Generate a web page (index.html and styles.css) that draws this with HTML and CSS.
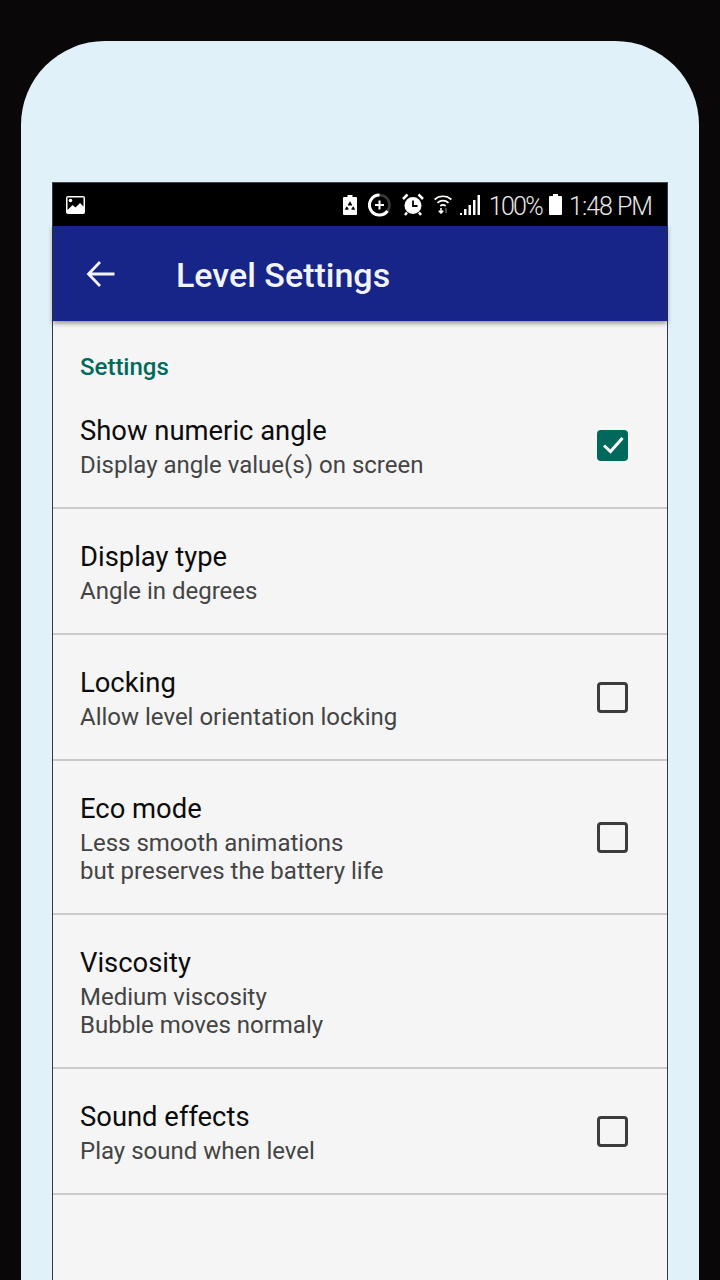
FILE: index.html
```html
<!DOCTYPE html>
<html lang="en">
<head>
  <meta charset="UTF-8">
  <meta name="viewport" content="width=device-width, initial-scale=1.0">
  <title>Level Settings</title>
  <link rel="stylesheet" href="styles.css">
</head>
<body>
  <div class="phone">
    <div class="screen">
      <div class="statusbar">
        <svg class="ic-image" width="19" height="18" viewBox="0 0 19 18"><path fill="#fff" d="M2 0h15a2 2 0 0 1 2 2v14a2 2 0 0 1-2 2H2a2 2 0 0 1-2-2V2a2 2 0 0 1 2-2z"/><path fill="#000" d="M1.500 1.500h16v9L14 7l-4.500 4.500-3-2.500-5 5z"/><circle cx="4.500" cy="4.500" r="1.800" fill="#fff"/></svg>
        <div class="status-right">
          <svg class="ic-saver" width="14" height="20" viewBox="0 0 14 20"><path fill="#fff" d="M4.500 0h5v2H13a1 1 0 0 1 1 1v16a1 1 0 0 1-1 1H1a1 1 0 0 1-1-1V3a1 1 0 0 1 1-1h3.500z"/><path fill="none" stroke="#000" stroke-width="1.700" d="M5.500 10.500L7 8l1.500 2.500M9.800 12l1 2H8.500M5.500 14H3.200l1-2"/></svg>
          <svg class="ic-data" width="23" height="24" viewBox="0 0 23 24"><circle cx="11.500" cy="12" r="10" fill="none" stroke="#3a3a3a" stroke-width="2.500"/><path fill="none" stroke="#fff" stroke-width="3" d="M11.500 2a10 10 0 1 0 8 16"/><path stroke="#fff" stroke-width="2" d="M11.500 7.500v9M7 12h9"/></svg>
          <svg class="ic-alarm" width="22" height="23" viewBox="0 0 22 23"><circle cx="11" cy="12.500" r="8.500" fill="#fff"/><path stroke="#000" stroke-width="1.800" fill="none" d="M11 7.500v5.500h4.500"/><path stroke="#fff" stroke-width="2.500" d="M1 6l4.500-4.500M21 6l-4.500-4.500M5 19.500l-2 2.500M17 19.500l2 2.500"/></svg>
          <svg class="ic-wifi" width="18" height="20" viewBox="0 0 18 20"><path fill="none" stroke="#fff" stroke-width="1.700" d="M.6 5.500a12.500 12.500 0 0 1 16.800 0M3.500 8.800a8.300 8.300 0 0 1 11 0M6.300 12a4 4 0 0 1 5.400 0"/><path stroke="#fff" stroke-width="1.600" fill="none" d="M7 14v5M4.800 16.800L7 19l2.200-2.200"/><path stroke="#666" stroke-width="1.400" d="M12 19v-5"/></svg>
          <svg class="ic-signal" width="20" height="20" viewBox="0 0 20 20"><path fill="#fff" d="M0 18h2v2H0zM4 14h2.500v6H4zM8.500 10H11v10H8.500zM13 5h2.500v15H13zM17.500 0H20v20h-2.500z"/></svg>
          <span class="pct">100%</span>
          <svg class="ic-batt" width="13" height="21" viewBox="0 0 13 21"><path fill="#fff" d="M4 0h5v2h3a1 1 0 0 1 1 1v17a1 1 0 0 1-1 1H1a1 1 0 0 1-1-1V3a1 1 0 0 1 1-1h3z"/></svg>
          <span class="clock">1:48 PM</span>
        </div>
      </div>
      <header class="appbar">
        <svg class="back" width="30" height="28" viewBox="0 0 30 28"><path fill="none" stroke="#f2f4fb" stroke-width="2.800" d="M28.500 14H3M14 2L2.500 14 14 26"/></svg>
        <h1>Level Settings</h1>
      </header>
      <div class="list">
        <div class="section">Settings</div>

        <div class="row">
          <div class="row-text">
            <div class="title">Show numeric angle</div>
            <div class="sub">Display angle value(s) on screen</div>
          </div>
          <span class="check on"><svg width="24" height="20" viewBox="0 0 24 20"><path fill="none" stroke="#fff" stroke-width="3" d="M3 10.500l6.500 6L21.500 3"/></svg></span>
        </div>

        <div class="row">
          <div class="row-text">
            <div class="title">Display type</div>
            <div class="sub">Angle in degrees</div>
          </div>
        </div>

        <div class="row">
          <div class="row-text">
            <div class="title">Locking</div>
            <div class="sub">Allow level orientation locking</div>
          </div>
          <span class="check"></span>
        </div>

        <div class="row">
          <div class="row-text">
            <div class="title">Eco mode</div>
            <div class="sub">Less smooth animations<br>but preserves the battery life</div>
          </div>
          <span class="check"></span>
        </div>

        <div class="row">
          <div class="row-text">
            <div class="title">Viscosity</div>
            <div class="sub">Medium viscosity<br>Bubble moves normaly</div>
          </div>
        </div>

        <div class="row">
          <div class="row-text">
            <div class="title">Sound effects</div>
            <div class="sub">Play sound when level</div>
          </div>
          <span class="check"></span>
        </div>
      </div>
    </div>
  </div>
</body>
</html>
```

FILE: styles.css
```css
html, body { height: 100%; }
body { margin: 0; background: #0a0708; font-family: Roboto, "Liberation Sans", sans-serif; overflow: hidden; }

.phone { box-sizing: border-box; height: 1239px; margin: 41px 21px 0; padding: 141px 31px 0; background: #e0f1f9; border-radius: 84px 84px 0 0; overflow: hidden; }
.screen { height: 1098px; background: #f5f5f5; border: solid #333a44; border-width: 1px 1px 0 1px; border-top-color: #444; }

.statusbar { height: 43px; background: #000; display: flex; align-items: center; justify-content: space-between; padding: 0 15px 0 13px; color: #e8e8e8; }
.status-right { display: flex; align-items: center; }
.ic-data { margin-left: 11px; }
.ic-alarm { margin-left: 11px; }
.ic-wifi { margin-left: 10px; margin-top: -2px; }
.ic-signal { margin-left: 8px; }
.pct, .clock { font-size: 25px; line-height: 43px; font-weight: 300; letter-spacing: -1px; padding-top: 3px; }
.pct { margin-left: 9px; letter-spacing: -1.700px; }
.ic-batt { margin-left: 7px; }
.clock { margin-left: 7px; }

.appbar { height: 95px; background: #172589; display: flex; align-items: center; padding-left: 33px; box-shadow: 0 2px 5px rgba(0,0,0,0.45); position: relative; }
.appbar h1 { margin: 2px 0 0 60px; font-size: 34px; font-weight: 500; color: #f2f4fb; }

.section { height: 62px; box-sizing: border-box; padding: 33px 0 0 27px; font-size: 24px; line-height: 27px; font-weight: 500; color: #00695c; }

.row { display: flex; align-items: center; justify-content: space-between; padding: 0 39px 0 27px; border-bottom: 2px solid #cbcbcb; }
.row-text { padding: 31px 0 28px; }
.title { font-size: 27.400px; line-height: 34px; color: #0c0c0c; }
.sub { margin-top: 3px; font-size: 24px; line-height: 28px; color: #444; }

.check { box-sizing: border-box; width: 31px; height: 31px; border: 3.500px solid #3c3c3c; border-radius: 4px; display: flex; align-items: center; justify-content: center; }
.check.on { background: #00695c; border: none; }
```
